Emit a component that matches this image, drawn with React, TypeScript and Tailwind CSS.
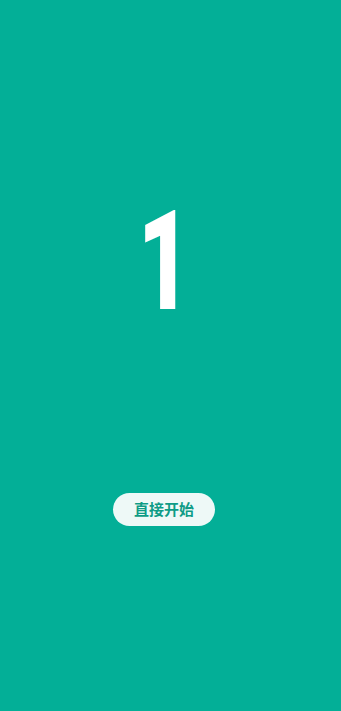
export default function App() {
  return (
    <div className="h-[711px] w-full bg-[#03af97]">
      <div className="flex w-[328px] flex-col items-center">
        <div className="mt-[171px] flex h-[180px] items-center justify-center">
          <span className="inline-block scale-x-[0.66] font-['Roboto',sans-serif] text-[139px] font-black leading-none text-white">1</span>
        </div>
        <button className="mt-[142px] flex h-[33px] w-[102px] items-center justify-center rounded-full bg-[#eef9f7] font-['Noto_Sans_CJK_SC',sans-serif] text-[15px] font-bold text-[#0e9c86]">
          直接开始
        </button>
      </div>
    </div>
  );
}
